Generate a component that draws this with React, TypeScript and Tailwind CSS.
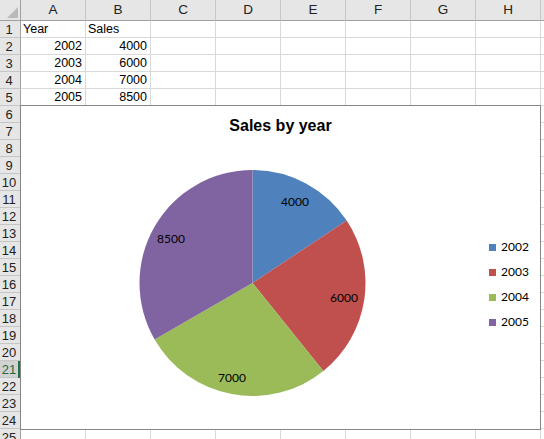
import React from "react";

const COLS = ["A", "B", "C", "D", "E", "F", "G", "H", "I"];
const ROW_COUNT = 25;
const SELECTED_ROW = 21;

const data: Record<string, { text: string; align: "left" | "right" }> = {
  A1: { text: "Year", align: "left" },
  B1: { text: "Sales", align: "left" },
  A2: { text: "2002", align: "right" },
  B2: { text: "4000", align: "right" },
  A3: { text: "2003", align: "right" },
  B3: { text: "6000", align: "right" },
  A4: { text: "2004", align: "right" },
  B4: { text: "7000", align: "right" },
  A5: { text: "2005", align: "right" },
  B5: { text: "8500", align: "right" },
};

const series = [
  { year: "2002", value: 4000, color: "#4F81BD", lx: 274, ly: 95 },
  { year: "2003", value: 6000, color: "#C0504D", lx: 323, ly: 191 },
  { year: "2004", value: 7000, color: "#9BBB59", lx: 211, ly: 271 },
  { year: "2005", value: 8500, color: "#8064A2", lx: 150, ly: 132 },
];

function PieChart() {
  const cx = 231.5;
  const cy = 177;
  const r = 113;
  const total = series.reduce((s, d) => s + d.value, 0);
  let start = 0;
  const slices = series.map((d) => {
    const sweep = (d.value / total) * Math.PI * 2;
    const a0 = start;
    const a1 = start + sweep;
    start = a1;
    const x0 = cx + r * Math.sin(a0);
    const y0 = cy - r * Math.cos(a0);
    const x1 = cx + r * Math.sin(a1);
    const y1 = cy - r * Math.cos(a1);
    const large = sweep > Math.PI ? 1 : 0;
    const path = `M ${cx} ${cy} L ${x0} ${y0} A ${r} ${r} 0 ${large} 1 ${x1} ${y1} Z`;
    return { ...d, path };
  });

  return (
    <div className="absolute left-[20px] top-[105px] w-[521px] h-[325px] border border-[#868686] bg-white">
      <div className="absolute left-0 right-0 top-[10px] text-center text-[16px] font-bold text-black leading-[20px] font-['Liberation_Sans',Arial,sans-serif]">
        Sales by year
      </div>
      <svg className="absolute left-0 top-0" width="519" height="323" viewBox="0 0 519 323">
        {slices.map((s) => (
          <path key={s.year} d={s.path} fill={s.color} />
        ))}
        {slices.map((s) => (
          <text
            key={s.year + "-l"}
            x={s.lx}
            y={s.ly}
            textAnchor="middle"
            dominantBaseline="central"
            fontSize="12"
            fontFamily="Lato, 'Liberation Sans', sans-serif"
            fill="#000"
          >
            {s.value}
          </text>
        ))}
      </svg>
      <div className="absolute left-[468px] top-[134px] flex flex-col gap-[11px] font-['Lato','Liberation_Sans',sans-serif] text-[12px] text-black">
        {series.map((s) => (
          <div key={s.year} className="flex items-center h-[14px] gap-[5px]">
            <span className="w-[7px] h-[7px]" style={{ backgroundColor: s.color }} />
            <span className="leading-[14px]">{s.year}</span>
          </div>
        ))}
      </div>
    </div>
  );
}

export default function App() {
  const rows = Array.from({ length: ROW_COUNT }, (_, i) => i + 1);
  return (
    <div className="relative w-[544px] h-[439px] overflow-hidden bg-white font-['Liberation_Sans',Arial,sans-serif] text-black">
      {/* column headers */}
      <div className="flex h-[21px]">
        <div className="relative w-[21px] h-[21px] shrink-0 bg-[#e6e6e6] border-r border-b border-[#a0a0a0]">
          <svg className="absolute left-[7px] top-[7px]" width="11" height="11" viewBox="0 0 11 11">
            <polygon points="11,0 11,11 0,11" fill="#b9b9b9" />
          </svg>
        </div>
        {COLS.map((c) => (
          <div
            key={c}
            className="w-[65px] h-[21px] shrink-0 bg-[#e6e6e6] border-r border-r-[#c6c6c6] border-b border-b-[#a0a0a0] flex items-center justify-center text-[13.5px] text-[#222]"
          >
            {c === "I" ? null : c}
          </div>
        ))}
      </div>
      {/* grid body */}
      {rows.map((r) => {
        const sel = r === SELECTED_ROW;
        return (
          <div key={r} className="flex h-[17px]">
            <div
              className={
                sel
                  ? "relative w-[21px] h-[17px] shrink-0 bg-[#d2d2d2] border-r border-r-[#a0a0a0] border-b border-b-[#c6c6c6] flex items-center justify-center text-[13px] text-[#1e6b40] leading-none"
                  : "relative w-[21px] h-[17px] shrink-0 bg-[#e6e6e6] border-r border-r-[#a0a0a0] border-b border-b-[#c6c6c6] flex items-center justify-center text-[13px] text-[#222] leading-none"
              }
            >
              <span className="pr-[2px]">{r}</span>
              {sel && <span className="absolute right-[-1px] top-0 w-[3px] h-[17px] bg-[#217346]" />}
            </div>
            {COLS.map((c) => {
              const cell = data[`${c}${r}`];
              return (
                <div
                  key={c}
                  className={
                    cell && cell.align === "right"
                      ? "w-[65px] h-[17px] shrink-0 border-r border-b border-[#d9d9d9] flex items-center justify-end pr-[3px] text-[12.5px] leading-none"
                      : "w-[65px] h-[17px] shrink-0 border-r border-b border-[#d9d9d9] flex items-center justify-start pl-[2px] text-[12.5px] leading-none"
                  }
                >
                  {cell ? cell.text : null}
                </div>
              );
            })}
          </div>
        );
      })}
      <PieChart />
    </div>
  );
}
